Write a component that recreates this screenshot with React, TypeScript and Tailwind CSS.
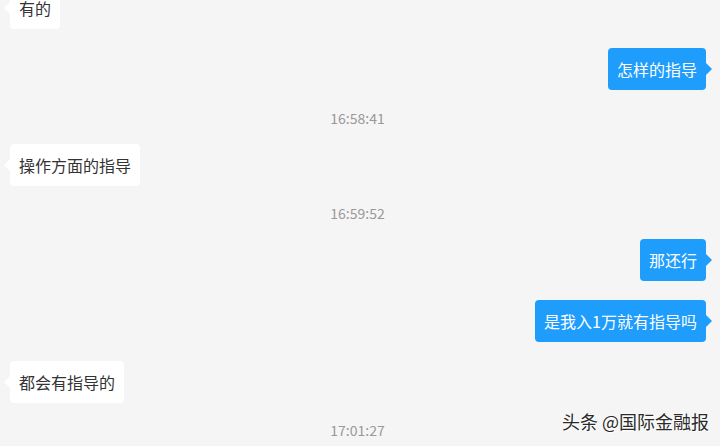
import React from "react";

type Msg =
  | { kind: "in" | "out"; text: string; mt: string }
  | { kind: "time"; text: string; mt: string };

const messages: Msg[] = [
  { kind: "in", text: "有的", mt: "mt-[-13px]" },
  { kind: "out", text: "怎样的指导", mt: "mt-[19px]" },
  { kind: "time", text: "16:58:41", mt: "mt-[18px]" },
  { kind: "in", text: "操作方面的指导", mt: "mt-[16px]" },
  { kind: "time", text: "16:59:52", mt: "mt-[17px]" },
  { kind: "out", text: "那还行", mt: "mt-[16px]" },
  { kind: "out", text: "是我入1万就有指导吗", mt: "mt-[19px]" },
  { kind: "in", text: "都会有指导的", mt: "mt-[19px]" },
  { kind: "time", text: "17:01:27", mt: "mt-[17px]" },
];

function Bubble({ kind, text }: { kind: "in" | "out"; text: string }) {
  const isOut = kind === "out";
  return (
    <div className={`flex ${isOut ? "justify-end pr-[14px]" : "justify-start pl-[10px]"}`}>
      <div
        className={`relative h-[42px] flex items-center px-[9px] rounded-[4px] text-[16px] ${
          isOut ? "bg-[#1e9dfd] text-white" : "bg-white text-[#333]"
        }`}
      >
        {text}
        {isOut ? (
          <span className="absolute right-[-6px] top-1/2 -translate-y-1/2 w-0 h-0 border-y-[6px] border-y-transparent border-l-[6px] border-l-[#1e9dfd]" />
        ) : (
          <span className="absolute left-[-6px] top-1/2 -translate-y-1/2 w-0 h-0 border-y-[6px] border-y-transparent border-r-[6px] border-r-white" />
        )}
      </div>
    </div>
  );
}

export default function App() {
  return (
    <div
      className="relative w-[720px] h-[446px] overflow-hidden bg-[#f5f5f5]"
      style={{ fontFamily: '"Noto Sans CJK SC", "Noto Sans", sans-serif' }}
    >
      <div className="flex flex-col">
        {messages.map((m, i) =>
          m.kind === "time" ? (
            <div key={i} className={`${m.mt} h-[20px] flex items-center justify-center pr-[5px] text-[14px] text-[#999]`}>
              {m.text}
            </div>
          ) : (
            <div key={i} className={m.mt}>
              <Bubble kind={m.kind} text={m.text} />
            </div>
          )
        )}
      </div>
      <div className="absolute right-[11px] bottom-[11px] text-[18px] text-[#2a2a2a] [text-shadow:0_0_2px_#fff,0_0_2px_#fff,1px_1px_1px_#fff]">
        头条 @国际金融报
      </div>
    </div>
  );
}
